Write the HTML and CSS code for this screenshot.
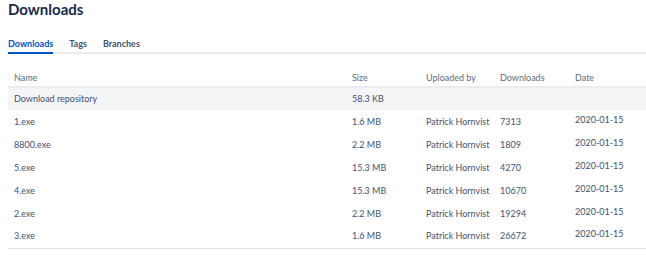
FILE: index.html
```html
<!DOCTYPE html>
<html lang="en">
<head>
    <meta charset="UTF-8">
    <title>Downloads</title>
    <link rel="stylesheet" href="styles.css">
</head>
<body>
    <h1 class="page-title">Downloads</h1>

    <div class="tabs">
        <a class="tab active" href="#">Downloads</a>
        <a class="tab" href="#">Tags</a>
        <a class="tab" href="#">Branches</a>
    </div>

    <table class="downloads-table">
        <thead>
            <tr>
                <th class="col-name">Name</th>
                <th class="col-size">Size</th>
                <th class="col-user">Uploaded by</th>
                <th class="col-count">Downloads</th>
                <th class="col-date">Date</th>
            </tr>
        </thead>
        <tbody>
            <tr class="repo-row">
                <td>Download repository</td>
                <td>58.3 KB</td>
                <td></td>
                <td></td>
                <td></td>
            </tr>
            <tr>
                <td>1.exe</td>
                <td>1.6 MB</td>
                <td>Patrick Hornvist</td>
                <td>7313</td>
                <td class="date">2020-01-15</td>
            </tr>
            <tr>
                <td>8800.exe</td>
                <td>2.2 MB</td>
                <td>Patrick Hornvist</td>
                <td>1809</td>
                <td class="date">2020-01-15</td>
            </tr>
            <tr>
                <td>5.exe</td>
                <td>15.3 MB</td>
                <td>Patrick Hornvist</td>
                <td>4270</td>
                <td class="date">2020-01-15</td>
            </tr>
            <tr>
                <td>4.exe</td>
                <td>15.3 MB</td>
                <td>Patrick Hornvist</td>
                <td>10670</td>
                <td class="date">2020-01-15</td>
            </tr>
            <tr>
                <td>2.exe</td>
                <td>2.2 MB</td>
                <td>Patrick Hornvist</td>
                <td>19294</td>
                <td class="date">2020-01-15</td>
            </tr>
            <tr>
                <td>3.exe</td>
                <td>1.6 MB</td>
                <td>Patrick Hornvist</td>
                <td>26672</td>
                <td class="date">2020-01-15</td>
            </tr>
        </tbody>
    </table>
</body>
</html>
```

FILE: styles.css
```css
body {
    margin: 0;
    padding: 0 0 0 8px;
    font-family: Lato, "Open Sans", sans-serif;
    color: #172b4d;
    background-color: #fff;
    overflow: hidden;
}

.page-title {
    margin: 0;
    font-size: 15px;
    font-weight: 700;
    line-height: 18px;
    color: #172b4d;
}

.tabs {
    display: flex;
    gap: 16px;
    margin-top: 20px;
    border-bottom: 2px solid #ebecf0;
}

.tab {
    font-size: 9px;
    font-weight: 700;
    line-height: 12px;
    color: #42526e;
    text-decoration: none;
    padding-bottom: 2px;
    margin-bottom: -2px;
    border-bottom: 2px solid transparent;
}

.tab.active {
    color: #0052cc;
    border-bottom-color: #0052cc;
}

.downloads-table {
    width: 100%;
    table-layout: fixed;
    margin-top: 14px;
    border-collapse: collapse;
    font-size: 9px;
    border-bottom: 1px solid #dfe1e6;
    white-space: nowrap;
}

.downloads-table th {
    box-sizing: border-box;
    text-align: left;
    font-weight: 400;
    color: #5e6c84;
    padding: 4px 6px 2px;
    line-height: 12px;
    border-bottom: 2px solid #ebecf0;
}

.downloads-table td {
    height: 23px;
    box-sizing: border-box;
    padding: 0 6px;
    line-height: 12px;
    color: #42526e;
}

.repo-row td {
    background-color: #f4f5f7;
}

.downloads-table td.date {
    padding-bottom: 4px;
}

.col-name { width: 338px; }
.col-size { width: 74px; }
.col-user { width: 74px; }
.col-count { width: 75px; }
```
